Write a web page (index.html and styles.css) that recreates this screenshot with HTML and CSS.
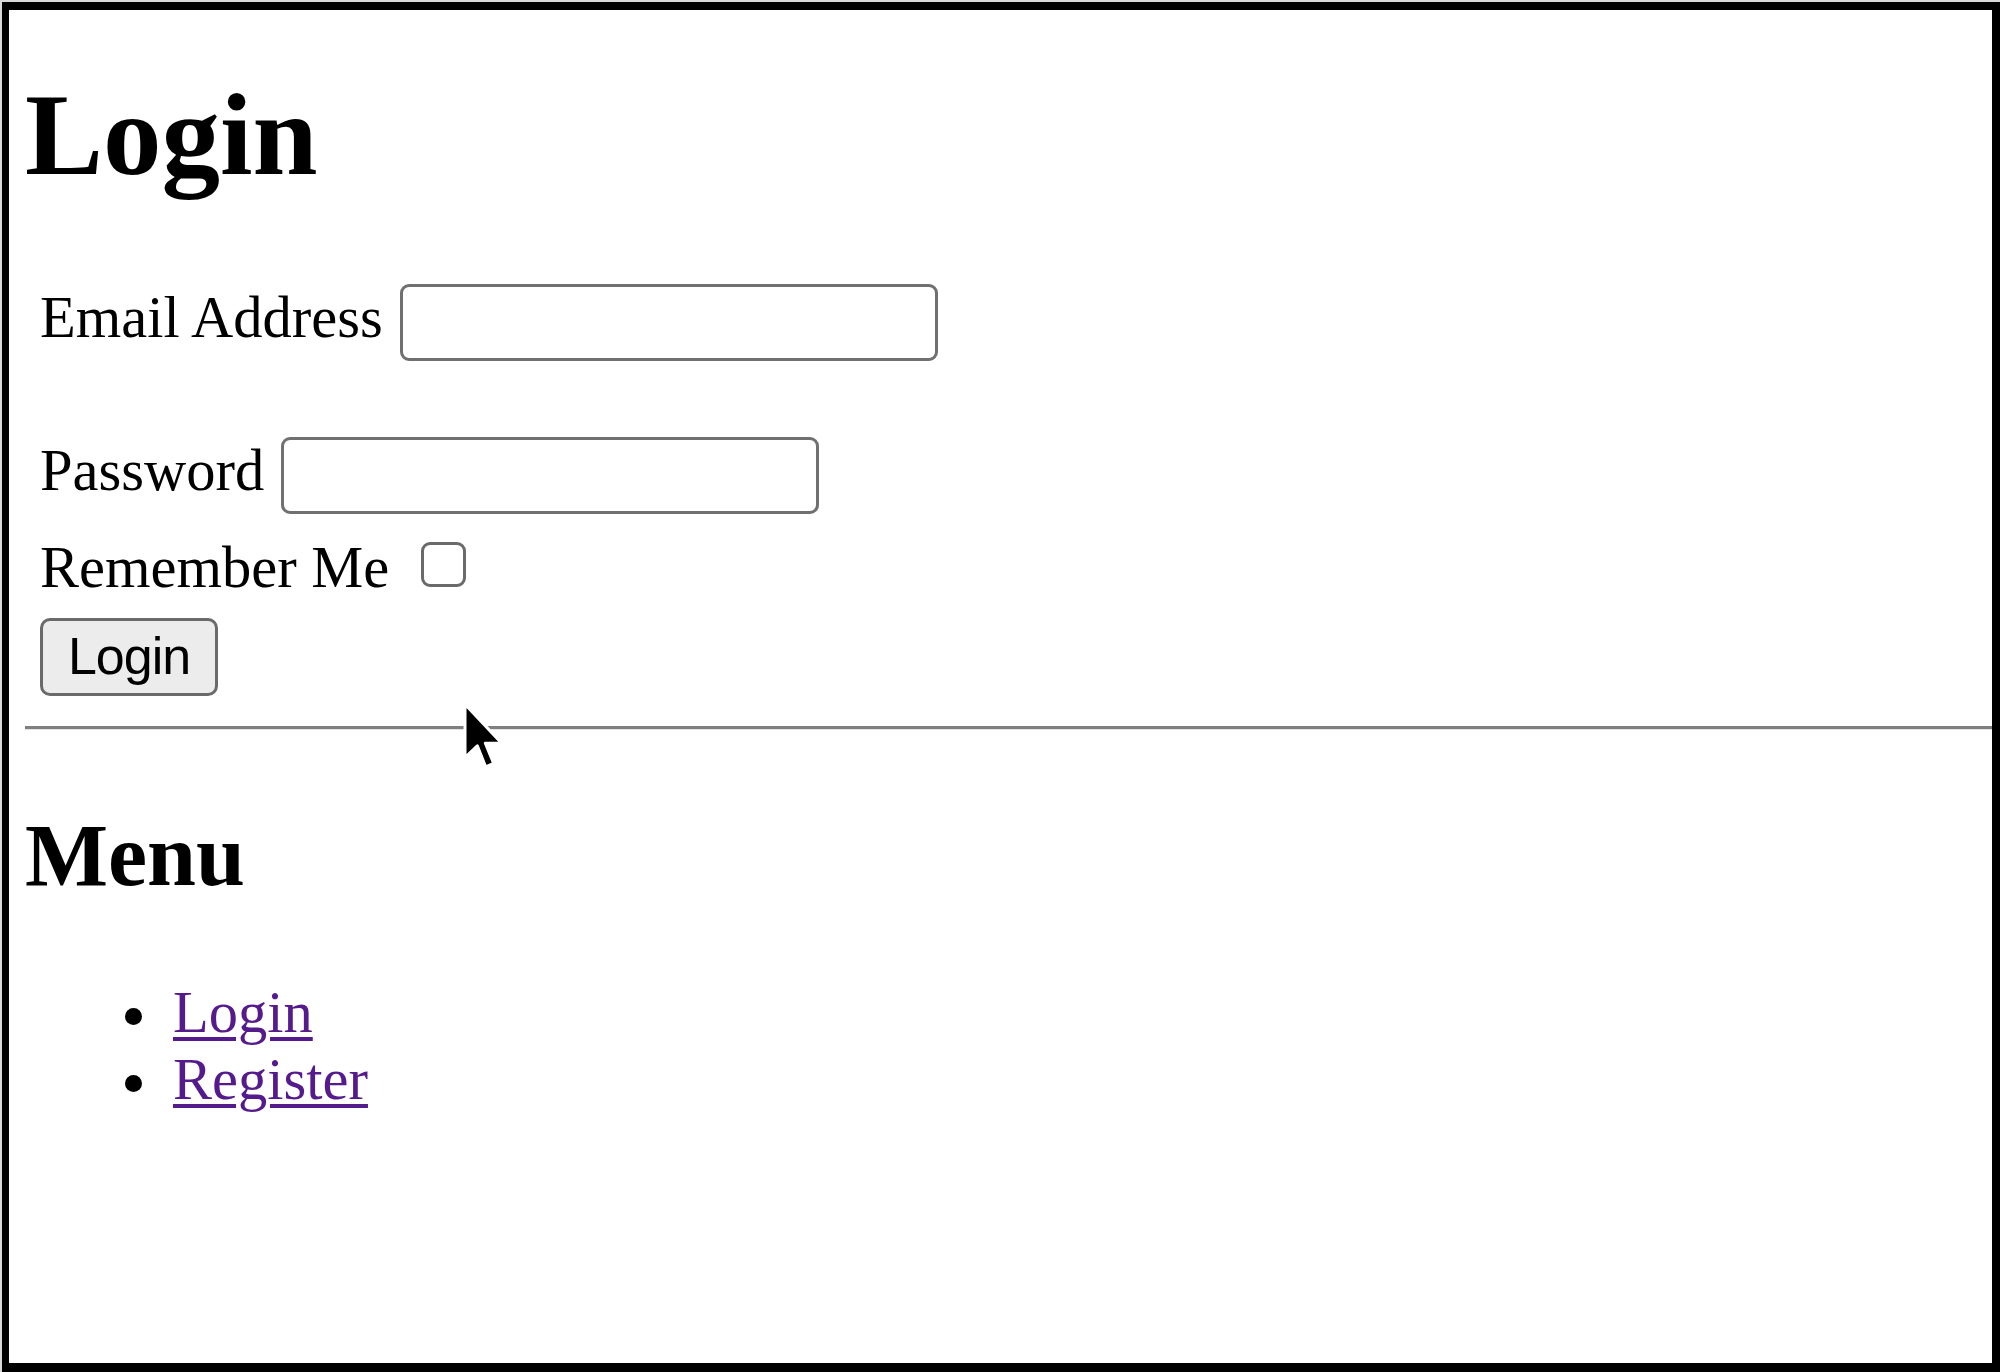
FILE: index.html
```html
<!DOCTYPE html>
<html lang="en">
<head>
<meta charset="utf-8">
<title>Login</title>
<link rel="stylesheet" href="styles.css">
</head>
<body>
<div class="frame">
  <main class="page">
    <h1 class="title">Login</h1>
    <form class="form">
      <div class="row row-email">
        <label class="label" for="email">Email Address</label><input class="field" id="email" type="text">
      </div>
      <div class="row row-password">
        <label class="label" for="password">Password</label><input class="field" id="password" type="password">
      </div>
      <div class="row row-remember">
        <label class="label" for="remember">Remember Me</label><span class="check" id="remember"></span>
      </div>
      <div class="row row-button">
        <button class="btn" type="button">Login</button>
      </div>
    </form>
    <hr class="rule">
    <h2 class="subtitle">Menu</h2>
    <ul class="menu">
      <li class="menu-item"><a class="link" href="#">Login</a></li>
      <li class="menu-item"><a class="link" href="#">Register</a></li>
    </ul>
    <svg class="cursor" width="40" height="69" viewBox="0 0 12 20.6">
      <path d="M0.6 0.6 L0.6 16.6 L4.3 13.1 L6.8 19.4 L9.2 18.4 L6.7 12.3 L11.6 12.3 Z" fill="#000" stroke="#fff" stroke-width="0.9" stroke-linejoin="round"/>
    </svg>
  </main>
</div>
</body>
</html>
```

FILE: styles.css
```css
html, body {
  margin: 0;
  padding: 0;
}

body {
  background: #d9d9d9;
  width: 2000px;
  height: 1372px;
  overflow: hidden;
}

.frame {
  box-sizing: border-box;
  margin: 2px 0 0 2px;
  width: 1998px;
  height: 1370px;
  border-style: solid;
  border-color: #000;
  border-width: 8px 8px 9px 7px;
  background: #fff;
}

.page {
  position: relative;
  padding-left: 16px;
  font-family: "Liberation Serif", "Times New Roman", serif;
  color: #000;
}

.title {
  margin: 59px 0 0 0;
  font-size: 117px;
  line-height: 132px;
  font-weight: bold;
}

.form {
  margin: 83px 0 0 0;
  padding-left: 15px;
}

.row {
  display: flex;
  align-items: flex-start;
}

.label {
  font-size: 58.5px;
  line-height: 66px;
  white-space: nowrap;
}

.row-email .label,
.row-password .label {
  margin-top: 1px;
}

.field {
  box-sizing: border-box;
  width: 538px;
  height: 77px;
  margin: 0 0 0 17px;
  padding: 0;
  border: 3px solid #707070;
  border-radius: 9px;
  background: #fff;
}

.row-email {
  margin-top: -2px;
}

.row-email .label {
  margin-top: 3px;
}

.row-email .field {
  margin-top: 2px;
}

.row-password {
  margin-top: 76px;
}

.row-remember {
  margin-top: 21px;
}

.check {
  box-sizing: border-box;
  display: block;
  width: 45px;
  height: 45px;
  margin: 7px 0 0 32px;
  border: 3px solid #6a6a6a;
  border-radius: 9px;
  background: #fff;
}

.row-button {
  margin-top: 17px;
}

.btn {
  box-sizing: border-box;
  width: 178px;
  height: 78px;
  margin: 0;
  padding: 0 0 2px 0;
  border: 3px solid #6a6a6a;
  border-radius: 10px;
  background: #ececec;
  font-family: "Liberation Sans", Arial, sans-serif;
  font-size: 52px;
  letter-spacing: -1px;
  color: #000;
}

.rule {
  box-sizing: border-box;
  margin: 30px 0 0 0;
  height: 4px;
  border: 0;
  border-top: 3px solid #7f7f7f;
  border-bottom: 1px solid #e2e2e2;
}

.subtitle {
  margin: 75px 0 0 0;
  font-size: 88px;
  line-height: 101px;
  font-weight: bold;
}

.menu {
  margin: 73px 0 0 0;
  padding: 0 0 0 148px;
  list-style: none;
}

.menu-item {
  font-size: 58.5px;
  line-height: 67px;
}

.menu-item::before {
  content: "";
  display: inline-block;
  width: 17px;
  height: 17px;
  border-radius: 50%;
  background: #000;
  margin-left: -48px;
  margin-right: 31px;
  vertical-align: 7px;
}

.link {
  color: #551a8b;
  text-decoration: underline;
  text-decoration-thickness: 4px;
  text-underline-offset: 5px;
}

.cursor {
  position: absolute;
  left: 454px;
  top: 633px;
}
```
